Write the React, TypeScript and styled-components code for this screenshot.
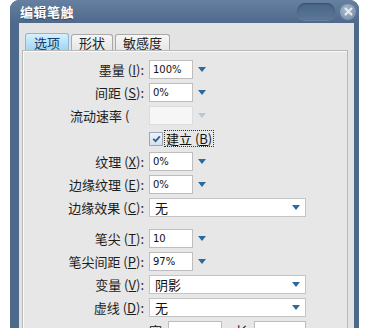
import React from 'react';
import styled, { createGlobalStyle } from 'styled-components';

const GlobalStyle = createGlobalStyle`
  html, body {
    margin: 0;
    padding: 0;
    background: #ffffff;
  }
  body {
    font-family: "Noto Sans CJK SC", "DejaVu Sans", sans-serif;
  }
`;

const Page = styled.div`
  width: 371px;
  height: 328px;
  overflow: hidden;
  padding-left: 10px;
  box-sizing: border-box;
`;

const Window = styled.div`
  width: 349px;
  height: 340px;
  display: flex;
  flex-direction: column;
  background: #4e6a8b;
  border-radius: 9px 9px 0 0;
  padding: 0 5px 0 9px;
  box-sizing: border-box;
`;

const TitleBar = styled.div`
  height: 23px;
  display: flex;
  align-items: center;
  justify-content: space-between;
  margin-left: -9px;
  margin-right: -5px;
  padding: 0 3px 0 10px;
  border-radius: 9px 9px 0 0;
  background: linear-gradient(#6580a0, #50698a);
  flex-shrink: 0;
`;

const Title = styled.div`
  color: #ffffff;
  font-size: 13px;
  font-weight: 700;
  letter-spacing: 0.5px;
  text-shadow: 0 1px 1px #2e4560;
`;

const TitleButtons = styled.div`
  display: flex;
  align-items: center;
  gap: 5px;
`;

const Pill = styled.div`
  width: 38px;
  height: 17px;
  border-radius: 9px;
  background: linear-gradient(#4a6686, #5a7698);
  box-shadow: inset 0 1px 2px rgba(0, 0, 0, 0.25), 0 1px 0 rgba(255, 255, 255, 0.15);
`;

const CloseButton = styled.div`
  width: 16px;
  height: 16px;
  border-radius: 50%;
  background: radial-gradient(circle at 40% 35%, #a9b9cb, #6d84a0);
  display: flex;
  align-items: center;
  justify-content: center;
`;

const Body = styled.div`
  flex: 1;
  background: #e3e3e3;
  padding: 10px 6px 0 3px;
  display: flex;
  flex-direction: column;
`;

const Tabs = styled.div`
  display: flex;
  gap: 2px;
  padding-left: 3px;
  height: 17px;
  align-items: flex-end;
`;

const Tab = styled.div<{ active?: boolean }>`
  height: ${p => (p.active ? 17 : 16)}px;
  padding: 0 ${p => (p.active ? 8 : 7)}px;
  box-sizing: border-box;
  border: 1px solid ${p => (p.active ? '#8fb7d3' : '#a9a9a9')};
  border-bottom: none;
  border-radius: 3px 3px 0 0;
  background: ${p => (p.active ? 'linear-gradient(#d6f0fc, #9fd6f2)' : 'linear-gradient(#f6f6f6, #e6e6e6)')};
  color: ${p => (p.active ? '#123c6b' : '#222222')};
  font-size: 13px;
  line-height: 15px;
  display: flex;
  align-items: center;
`;

const Panel = styled.div`
  flex: 1;
  border: 1px solid #b9b9b9;
  box-shadow: inset 1px 1px 0 #fafafa;
  background: #e7e7e7;
  padding-top: 9px;
  display: grid;
  grid-template-columns: 121px 1fr;
  grid-auto-rows: auto;
  column-gap: 5px;
  row-gap: 4px;
  align-content: start;
`;

const Label = styled.div<{ clip?: boolean }>`
  justify-self: end;
  align-self: center;
  font-size: 13px;
  color: #1c1c1c;
  white-space: nowrap;
  line-height: 19px;
  ${p => p.clip && `
    width: 60px;
    overflow: hidden;
    margin-right: 14px;
  `}

  u {
    text-decoration: underline;
    text-underline-offset: 1px;
  }
`;

const Field = styled.div`
  display: flex;
  align-items: center;
  gap: 5px;
  height: 19px;
`;

const Input = styled.div<{ disabled?: boolean; w?: number }>`
  width: ${p => p.w ?? 44}px;
  height: 19px;
  box-sizing: border-box;
  border: 1px solid ${p => (p.disabled ? '#dcdcdc' : '#bdbdbd')};
  background: ${p => (p.disabled ? '#f6f6f6' : '#ffffff')};
  color: #111111;
  font-family: "DejaVu Sans", sans-serif;
  font-size: 10px;
  line-height: 17px;
  padding-left: 3px;
`;

const Arrow = styled.div<{ faded?: boolean }>`
  width: 0;
  height: 0;
  border-left: 4px solid transparent;
  border-right: 4px solid transparent;
  border-top: 5px solid ${p => (p.faded ? '#b9c7d4' : '#2b6a9e')};
`;

const Select = styled.div`
  width: 157px;
  height: 19px;
  box-sizing: border-box;
  border: 1px solid #c4c4c4;
  background: #ffffff;
  display: flex;
  align-items: center;
  justify-content: space-between;
  padding: 0 5px 0 5px;
  font-size: 13px;
  color: #111111;
`;

const CheckRow = styled.div`
  display: flex;
  align-items: center;
  gap: 2px;
  height: 19px;
`;

const CheckBox = styled.div`
  width: 12px;
  height: 12px;
  border: 1px solid #9aa9b8;
  background: linear-gradient(#eef3f8, #d7e0ea);
  display: flex;
  align-items: center;
  justify-content: center;
`;

const CheckLabel = styled.div`
  font-size: 13px;
  color: #111111;
  padding: 0 1px;
  line-height: 15px;
  outline: 1px dotted #333333;

  u {
    text-underline-offset: 1px;
  }
`;

const Spacer = styled.div`
  grid-column: 1 / -1;
  height: 4px;
`;

const SmallText = styled.div<{ offset?: number }>`
  font-size: 13px;
  line-height: 19px;
  color: #111111;
  width: 14px;
  margin-left: ${p => p.offset ?? 0}px;
`;

const Row = ({ label, ch, children }: { label: string; ch: string; children: React.ReactNode }) => (
  <>
    <Label>
      {label} (<u>{ch}</u>):
    </Label>
    {children}
  </>
);

const Num = ({ value }: { value: string }) => (
  <Field>
    <Input>{value}</Input>
    <Arrow />
  </Field>
);

const Drop = ({ value }: { value: string }) => (
  <Field>
    <Select>
      {value}
      <Arrow />
    </Select>
  </Field>
);

export default function App() {
  return (
    <Page>
      <GlobalStyle />
      <Window>
        <TitleBar>
          <Title>编辑笔触</Title>
          <TitleButtons>
            <Pill />
            <CloseButton>
              <svg width="9" height="9" viewBox="0 0 9 9">
                <path d="M1.5 1.5 L7.5 7.5 M7.5 1.5 L1.5 7.5" stroke="#e8eef5" strokeWidth="2" strokeLinecap="round" />
              </svg>
            </CloseButton>
          </TitleButtons>
        </TitleBar>
        <Body>
          <Tabs>
            <Tab active>选项</Tab>
            <Tab>形状</Tab>
            <Tab>敏感度</Tab>
          </Tabs>
          <Panel>
            <Row label="墨量" ch="I"><Num value="100%" /></Row>
            <Row label="间距" ch="S"><Num value="0%" /></Row>
            <Label clip>流动速率 (S):</Label>
            <Field>
              <Input disabled />
              <Arrow faded />
            </Field>
            <div />
            <CheckRow>
              <CheckBox>
                <svg width="9" height="8" viewBox="0 0 9 8">
                  <path d="M1.2 3.8 L3.6 6.2 L7.8 1.4" stroke="#2d5f92" strokeWidth="1.8" fill="none" />
                </svg>
              </CheckBox>
              <CheckLabel>建立 (<u>B</u>)</CheckLabel>
            </CheckRow>
            <Row label="纹理" ch="X"><Num value="0%" /></Row>
            <Row label="边缘纹理" ch="E"><Num value="0%" /></Row>
            <Row label="边缘效果" ch="C"><Drop value="无" /></Row>
            <Spacer />
            <Row label="笔尖" ch="T"><Num value="10" /></Row>
            <Row label="笔尖间距" ch="P"><Num value="97%" /></Row>
            <Row label="变量" ch="V"><Drop value="阴影" /></Row>
            <Row label="虚线" ch="D"><Drop value="无" /></Row>
            <div />
            <Field>
              <SmallText>宽</SmallText>
              <Input w={54} />
              <SmallText offset={8}>长</SmallText>
              <Input w={52} />
            </Field>
          </Panel>
        </Body>
      </Window>
    </Page>
  );
}
